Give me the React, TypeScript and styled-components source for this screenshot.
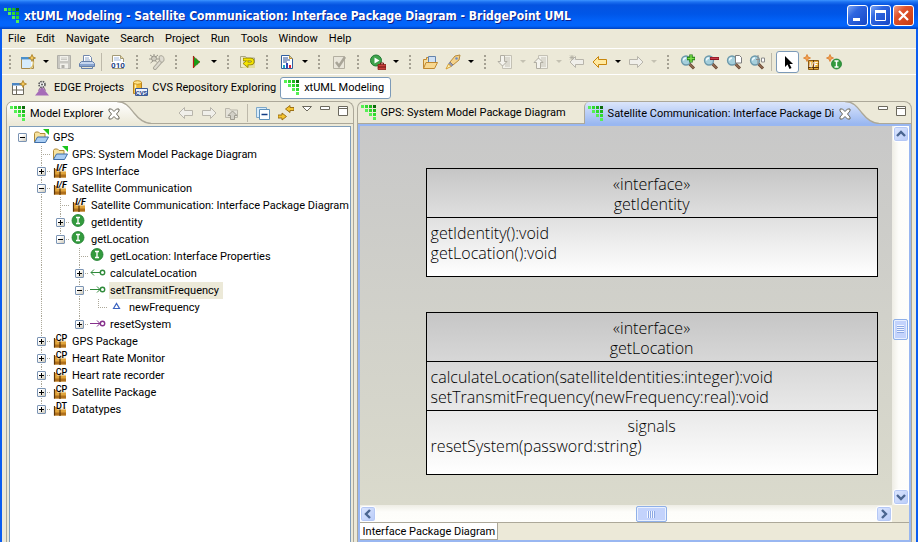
import React from "react";
import styled, { createGlobalStyle, css } from "styled-components";

const face = "#ece9d8";
const line = "#aca899";
const activeBlue = "#99b7f1";
const uiFont = 'Roboto, "Liberation Sans", sans-serif';

const GlobalStyle = createGlobalStyle`
  *, *::before, *::after { box-sizing: border-box; }
  body { margin: 0; background: ${face}; color: #000; font: 11px/16px ${uiFont}; }
  button { margin: 0; padding: 0; border: 0; background: none; color: inherit; font: inherit; }
  svg { display: block; flex: none; }
`;

/* ---------- window frame ---------- */

const Window = styled.div`
  height: 100vh;
  display: flex;
  flex-direction: column;
  overflow: hidden;
  background: ${face};
`;

const TitleBar = styled.header`
  flex: none;
  height: 29px;
  display: flex;
  align-items: center;
  gap: 4px;
  padding: 2px 4px 0;
  background: linear-gradient(#3d95ff 0, #1c70f0 2px, #0453e0 5px, #0056e8 14px, #0264fb 22px, #0264fb 26px, #0042c0 29px);
`;

const WindowTitle = styled.h1`
  flex: 1;
  min-width: 0;
  margin: 0;
  overflow: hidden;
  white-space: nowrap;
  color: #fff;
  font: bold 12px/20px "DejaVu Sans Condensed", "DejaVu Sans", sans-serif;
  text-shadow: 1px 1px 0 #0f1f8a;
`;

const WindowButtons = styled.div`
  display: flex;
  gap: 2px;
`;

const WindowButton = styled.button<{ $close?: boolean }>`
  width: 21px;
  height: 21px;
  display: grid;
  place-items: center;
  border: 1px solid #fff;
  border-radius: 3px;
  background: ${(p) =>
    p.$close
      ? "linear-gradient(135deg, #f0a088, #e0532c 35%, #c63a10)"
      : "linear-gradient(135deg, #7da6f4, #2f66e0 35%, #1747c6)"};
`;

const Frame = styled.div`
  flex: 1;
  min-height: 0;
  display: flex;
  flex-direction: column;
  border: solid #0a5cf0;
  border-width: 0 2px;
`;

/* ---------- menu and tool bars ---------- */

const MenuBar = styled.nav`
  flex: none;
  height: 20px;
  display: flex;
  align-items: center;
  gap: 11px;
  padding-left: 6px;
  border-bottom: 1px solid #fff;
`;

const ToolBar = styled.div`
  flex: none;
  height: 26px;
  display: flex;
  align-items: center;
  border-bottom: 1px solid #fff;
`;

const ToolButton = styled.button<{ $pressed?: boolean }>`
  flex: none;
  width: 23px;
  height: 22px;
  display: grid;
  place-items: center;
  ${(p) =>
    p.$pressed &&
    css`
      border: 1px solid #7c9ab8;
      border-radius: 3px;
      background: #fff;
    `}
`;

const DropButton = styled.button<{ $off?: boolean }>`
  flex: none;
  width: 13px;
  height: 22px;
  display: grid;
  place-items: center;
  &::before {
    content: "";
    border: 3px solid transparent;
    border-top-color: ${(p) => (p.$off ? "#c4c1b2" : "#000")};
    border-bottom-width: 0;
  }
`;

const Handle = styled.span`
  flex: none;
  width: 16px;
  height: 14px;
  background: repeating-linear-gradient(#a5a193 0 2px, transparent 2px 4px) 7px 0 / 2px 14px no-repeat;
  &:first-child { width: 14px; }
`;

const Separator = styled.span`
  flex: none;
  width: 8px;
  height: 18px;
  background: linear-gradient(#bdb9aa, #bdb9aa) 3px 0 / 1px 100% no-repeat;
`;

const PerspectiveBar = styled.div`
  flex: none;
  height: 25px;
  display: flex;
  align-items: center;
  padding-left: 5px;
`;

const Perspective = styled.button<{ $active?: boolean }>`
  height: 22px;
  display: flex;
  align-items: center;
  gap: 4px;
  padding: 0 3px;
  white-space: nowrap;
  border: 1px solid transparent;
  ${(p) =>
    p.$active &&
    css`
      padding-right: 6px;
      border-color: #7c9ab8;
      border-radius: 3px;
      background: #fff;
    `}
`;

/* ---------- views ---------- */

const Workspace = styled.main`
  flex: 1;
  min-height: 0;
  display: grid;
  grid-template-columns: minmax(0, 348fr) minmax(0, 556fr);
  gap: 3px;
  padding: 1px 4px 0 4px;
`;

const View = styled.section`
  min-height: 0;
  display: flex;
  flex-direction: column;
  border: 1px solid ${line};
  border-bottom: 0;
  border-radius: 7px 8px 0 0;
  overflow: hidden;
`;

const TabStrip = styled.div`
  flex: none;
  height: 22px;
  display: flex;
`;

const Tab = styled.div<{ $tone?: "white" | "blue" }>`
  flex: none;
  display: flex;
  align-items: center;
  gap: 4px;
  padding: 1px 0 0 3px;
  white-space: nowrap;
  ${(p) =>
    p.$tone === "white" &&
    css`
      padding-right: 3px;
      background: linear-gradient(#fff, ${face});
    `}
  ${(p) =>
    p.$tone === "blue" &&
    css`
      border-left: 1px solid ${line};
      border-radius: 5px 0 0 0;
      background: linear-gradient(#dbe5fb, ${activeBlue});
    `}
  ${(p) =>
    !p.$tone &&
    css`
      flex: 0 0 226px;
      border-bottom: 1px solid ${line};
    `}
`;

const TabClose = styled.button`
  position: relative;
  margin: 0 -8px 0 1px;
`;

const StripRest = styled.div`
  flex: 1;
  min-width: 0;
  display: flex;
  align-items: center;
  justify-content: flex-end;
  padding-right: 1px;
  border-bottom: 1px solid ${line};
`;

const ViewButton = styled.button`
  flex: none;
  width: 18px;
  height: 18px;
  display: flex;
  justify-content: center;
  padding-top: 3px;
  align-self: flex-start;
`;

/* ---------- tree ---------- */

const TreeBox = styled.div`
  flex: 1;
  min-height: 0;
  margin: 2px 2px 0;
  padding: 2px 0 0 3px;
  overflow: hidden;
  border: 1px solid #7f9db9;
  border-bottom: 0;
  background: #fff;
`;

const TreeRow = styled.div`
  height: 17px;
  display: flex;
  align-items: center;
  white-space: nowrap;
`;

const vDots = "repeating-linear-gradient(#aca899 0 1px, transparent 1px 2px)";
const hDots = "repeating-linear-gradient(90deg, #aca899 0 1px, transparent 1px 2px)";

const Branch = styled.span<{ $kind: string }>`
  flex: none;
  width: 19px;
  height: 17px;
  display: grid;
  place-items: center;
  background-repeat: no-repeat;
  ${(p) =>
    p.$kind === "|" &&
    css`
      background-image: ${vDots};
      background-position: 9px 0;
      background-size: 1px 17px;
    `}
  ${(p) =>
    p.$kind === "+" &&
    css`
      background-image: ${vDots}, ${hDots};
      background-position: 9px 0, 9px 8px;
      background-size: 1px 17px, 10px 1px;
    `}
  ${(p) =>
    p.$kind === "L" &&
    css`
      background-image: ${vDots}, ${hDots};
      background-position: 9px 0, 9px 8px;
      background-size: 1px 8px, 10px 1px;
    `}
`;

const Expander = styled.button<{ $open: boolean }>`
  width: 9px;
  height: 9px;
  border: 1px solid #7b94b4;
  border-radius: 1px;
  background:
    linear-gradient(#000, #000) center / 5px 1px no-repeat,
    linear-gradient(#000, #000) center / 1px ${(p) => (p.$open ? 1 : 5)}px no-repeat,
    linear-gradient(135deg, #fff 30%, #cdc8b8);
`;

const TreeIcon = styled.span`
  flex: none;
  width: 20px;
  height: 17px;
  padding-left: 1px;
`;

const TreeLabel = styled.span<{ $selected?: boolean }>`
  height: 17px;
  padding: 1px 4px 0 1px;
  background: ${(p) => (p.$selected ? face : "none")};
`;

/* ---------- editor ---------- */

const EditorBody = styled.div`
  flex: 1;
  min-height: 0;
  display: grid;
  grid-template: minmax(0, 1fr) 17px 18px / minmax(0, 1fr) 17px;
  border: 2px solid ${activeBlue};
`;

const Canvas = styled.div`
  position: relative;
  overflow: hidden;
  background: linear-gradient(#c8c8c8, #dadacc);
`;

const ClassBox = styled.article<{ $top: number; $height: number }>`
  position: absolute;
  left: 66px;
  top: ${(p) => p.$top}px;
  width: 452px;
  height: ${(p) => p.$height}px;
  border: 1px solid #000;
  background: linear-gradient(#c6c6c6, #fff);
  font: 300 16px/20px "Open Sans", "Noto Sans", sans-serif;
  white-space: nowrap;
`;

const Compartment = styled.div`
  padding: 5px 4px 3px;
  & + & { border-top: 1px solid #000; }
`;

const Centered = styled.div`
  text-align: center;
`;

const ScrollBar = styled.div<{ $vertical?: boolean }>`
  display: flex;
  flex-direction: ${(p) => (p.$vertical ? "column" : "row")};
  padding: ${(p) => (p.$vertical ? "0 0 0 1px" : "1px 0 0")};
  background: linear-gradient(${(p) => (p.$vertical ? "90deg" : "180deg")}, #eeede5, #fdfdfa 40%, #fefefb);
`;

const ScrollArrow = styled.button`
  flex: none;
  width: 16px;
  height: 16px;
  display: grid;
  place-items: center;
  border: 1px solid #fff;
  border-radius: 3px;
  box-shadow: inset 0 0 0 1px #b5c8f5;
  background: linear-gradient(135deg, #dde7ff, #b8cbf8);
`;

const Space = styled.span<{ $share: number }>`
  flex: ${(p) => p.$share} 1 0;
`;

const Thumb = styled.span<{ $vertical?: boolean }>`
  flex: none;
  width: ${(p) => (p.$vertical ? 15 : 31)}px;
  height: ${(p) => (p.$vertical ? 21 : 16)}px;
  display: grid;
  place-items: center;
  border: 1px solid #8fb0e8;
  border-radius: 2px;
  box-shadow: inset 0 0 0 1px #e9f0ff;
  background: #c3d3fc;
  &::before {
    content: "";
    width: ${(p) => (p.$vertical ? 7 : 8)}px;
    height: ${(p) => (p.$vertical ? 8 : 7)}px;
    background: repeating-linear-gradient(${(p) => (p.$vertical ? "180deg" : "90deg")}, #f2f6ff 0 1px, #8ca8e4 1px 2px);
  }
`;

const PageTabs = styled.div`
  grid-column: 1 / -1;
  border-top: 1px solid ${line};
`;

const PageTab = styled.button`
  height: 17px;
  padding: 1px 2px 0 3px;
  border-right: 1px solid ${line};
  border-bottom: 1px solid ${line};
  background: #fff;
`;

/* ---------- icons ---------- */

type Kids = { children?: React.ReactNode };
const Ico = ({ children }: Kids) => (
  <svg width="16" height="16" viewBox="0 0 16 16" aria-hidden="true">{children}</svg>
);

const Logo = () => (
  <Ico>
    <g shapeRendering="crispEdges">
      <path d="M0 0h3v3H0zM4 4h3v3H4zM8 8h3v3H8zM12 12h3v3h-3z" fill="#55f055" />
      <path d="M4 0h3v3H4zM8 4h3v3H8zM12 8h3v3h-3z" fill="#2edb2e" />
      <path d="M8 0h3v3H8zM12 4h3v3h-3z" fill="#1fb81f" />
      <path d="M12 0h3v3h-3z" fill="#0b6b0b" />
    </g>
  </Ico>
);

const Spark = ({ x = 12, y = 4, c = "#f6c85a", s = "#a87a1c" }: { x?: number; y?: number; c?: string; s?: string }) => (
  <path d={`M${x} ${y - 3.5}l1 2.5 2.5 1-2.5 1-1 2.5-1-2.5-2.5-1 2.5-1z`} fill={c} stroke={s} strokeWidth=".8" />
);

const NewIcon = () => (
  <Ico>
    <path d="M1.500 3.500h12v11h-12z" fill="#f4faff" stroke="#a8894a" />
    <path d="M2 6h9v8H2z" fill="#d6ebfa" />
    <path d="M1 3h13v2.500H1z" fill="#4a90cc" />
    <path d="M10 14.500c3-1 3.500-3 3.500-7" fill="none" stroke="#d9c070" strokeWidth="1.500" />
    <Spark />
  </Ico>
);
const SaveIcon = () => (
  <Ico>
    <path d="M1.500 1.500h13v13h-13z" fill="#c9c8c2" stroke="#b0afa8" />
    <path d="M4 2h8v5H4zM4 9.500h8v5H4z" fill="#f1f0ea" />
    <path d="M5.500 11h3v3h-3z" fill="#b0afa8" />
    <path d="M5 4h6M5 5.500h6" stroke="#c9c8c2" />
  </Ico>
);
const PrintIcon = () => (
  <Ico>
    <path d="M4.500 7V1.500h6l2 2V7" fill="#fff" stroke="#7187ad" />
    <path d="M6 4h4M6 6h5" stroke="#8fa7cc" />
    <path d="M2.500 7.500h11l2 2v3h-15v-3z" fill="#c6d6ee" stroke="#6580ab" />
    <path d="M1 10h14v2H1z" fill="#88a4cf" />
    <path d="M2.500 12.500h11v2h-11z" fill="#e9e4ce" stroke="#6580ab" />
  </Ico>
);
const BinaryIcon = () => (
  <Ico>
    <path d="M2.500 1.500h8l3 3v10h-11z" fill="#fff" stroke="#a39a78" />
    <path d="M10.500 1.500v3h3" fill="#ead9a0" stroke="#a39a78" />
    <path d="M4 4h5M4 6h7" stroke="#9fb6da" />
    <path d="M1 8h14v6H1z" fill="#fff" />
    <text x="8" y="14" textAnchor="middle" fontSize="8" fontWeight="700" fill="#1d3f86" fontFamily="Roboto, sans-serif">010</text>
  </Ico>
);
const WrenchIcon = () => (
  <Ico>
    <path d="M6 14L13 6" stroke="#a8a598" strokeWidth="4" strokeLinecap="round" />
    <path d="M6 14L13 6" stroke="#dedbd0" strokeWidth="2" strokeLinecap="round" />
    <path d="M10 2.500c3-2 5 0 5 3s-3 3-4 2z" fill="#dedbd0" stroke="#a8a598" />
    <circle cx="5" cy="4.500" r="2.500" fill="#d0cdc0" stroke="#98958a" />
    <path d="M1 1l3 2M5 0v2M9 1L6.500 3M0 5h2.500M8 5h2M1.500 9L4 7M8 8.500L6.500 7" stroke="#98958a" />
  </Ico>
);
const PlayIcon = () => (
  <Ico>
    <path d="M5 2l7 6-7 6z" fill="#18a018" />
    <path d="M5.500 2v12" stroke="#c01818" strokeWidth="1.200" />
    <path d="M5 2l7 6-7 6" fill="none" stroke="#7a3a10" strokeDasharray="1 1" />
  </Ico>
);
const FolderSwapIcon = () => (
  <Ico>
    <path d="M.500 13.500v-11h5l1 1.500h8v9.500z" fill="#f0eccb" stroke="#a8a486" />
    <path d="M1 14h14V9z" fill="#e4dd9e" />
    <path d="M3 5.500h7.500c3 0 3 4 0 4H6" fill="none" stroke="#8a7c00" strokeWidth="3.400" />
    <path d="M8 5.500v8l-5-4z" fill="#f5e400" stroke="#8a7c00" strokeWidth=".8" />
    <path d="M3.500 5.500h7c3 0 3 4 0 4H6" fill="none" stroke="#f5e400" strokeWidth="2" />
  </Ico>
);
const ReportIcon = () => (
  <Ico>
    <path d="M2.500 1.500h8l3 3v10h-11z" fill="#fff" stroke="#2f5ea0" />
    <path d="M10.500 1.500v3h3" fill="#f3cf70" stroke="#b8903a" />
    <path d="M4 4h5M4 6h7M4 8h4" stroke="#2b4f95" />
    <path d="M4 11h2v3H4z" fill="#1aa6c8" />
    <path d="M7 9h2v5H7z" fill="#3048b8" />
    <path d="M10 11h2v3h-2z" fill="#e02038" />
  </Ico>
);
const CheckIcon = () => (
  <Ico>
    <path d="M2.500 2.500h11v12h-11z" fill="#e9e6da" stroke="#b3afa1" />
    <path d="M5 8l3 4 6-9" fill="none" stroke="#a9a598" strokeWidth="2.500" />
  </Ico>
);
const RunToolIcon = () => (
  <Ico>
    <circle cx="6" cy="6.500" r="5.500" fill="#3fa34c" stroke="#1f7a32" />
    <path d="M4.500 3.500l5 3-5 3z" fill="#fff" />
    <path d="M8 10.500h8v5H8z" fill="#c8403a" stroke="#8b1f1b" strokeWidth=".8" />
    <path d="M10.500 10.500v-1.500h3v1.500M8 13h8" fill="none" stroke="#6e1512" />
  </Ico>
);
const OpenFolderIcon = () => (
  <Ico>
    <path d="M1.500 14.500v-9h3v-2h3" fill="#f7dfa0" stroke="#c08830" />
    <path d="M6.500 2.500h7v8h-7z" fill="#cfe0f4" stroke="#6484ac" />
    <path d="M1.500 14.500l2.500-6h11.500l-3 6z" fill="#f8d890" stroke="#c08830" />
  </Ico>
);
const RocketIcon = () => (
  <Ico>
    <path d="M15 1l-5 1-5 6 3 3 6-5z" fill="#f3d28c" stroke="#b98a3a" />
    <path d="M5 8l3 3-2 1.500L3.500 10z" fill="#9a9cae" stroke="#6d7088" strokeWidth=".7" />
    <path d="M3.500 10l-2.500 5 5-2.500z" fill="#fff7c0" stroke="#d8a030" />
    <circle cx="11.500" cy="4.500" r="1.300" fill="#6f8fc8" />
  </Ico>
);
const AnnotationIcon = ({ up }: { up?: boolean }) => (
  <Ico>
    <path d="M5.500 1.500h9v13h-9z" fill="#f2f1ea" stroke="#c4c1b5" />
    <path d="M8 4h5M8 6h5M8 8h5M8 10h5M8 12h5" stroke="#c4c1b5" />
    <path
      d={up ? "M3.500 14.500v-6h-2.500l4.500-4.500 4.500 4.500H7.500v6z" : "M3.500 1.500v6h-2.500l4.500 4.500 4.500-4.500H7.500v-6z"}
      fill="#f4f3ed"
      stroke="#b0ada2"
    />
  </Ico>
);
const ArrowIcon = ({ right, gold, star }: { right?: boolean; gold?: boolean; star?: boolean }) => (
  <Ico>
    <path
      d={right ? "M15 8L9.500 2.500v3h-8v5h8v3z" : "M1 8l5.500-5.500v3h8v5h-8v3z"}
      fill={gold ? "#ffe9a0" : "#f0efea"}
      stroke={gold ? "#c8860c" : "#b8b5ab"}
    />
    {star && <path d="M3 1v5M.500 3.500h5M1 1.500l4 4M5 1.500l-4 4" stroke="#aeaba0" strokeWidth=".8" />}
  </Ico>
);
const Lens = ({ children }: Kids) => (
  <Ico>
    <path d="M9 9.500l5 5" stroke="#6b4a34" strokeWidth="3" />
    <path d="M9 9.500l4.500 4.500" stroke="#b08468" />
    <circle cx="6" cy="6.500" r="4.500" fill="#a5cfdc" stroke="#6d99ab" strokeWidth="1.300" />
    <path d="M3.500 6.500c0-1.500 1-2.500 2.500-2.500" fill="none" stroke="#f0fbff" strokeWidth="1.300" />
    {children}
  </Ico>
);
const PointerIcon = () => (
  <Ico>
    <path d="M5 2v11l2.500-2.500 2 4.500 2-1-2-4h3.500z" fill="#000" />
  </Ico>
);
const NewPackageIcon = () => (
  <Ico>
    <path d="M5.500 6.500h10v9h-10z" fill="#e3a93c" stroke="#8a5a14" />
    <path d="M5 13.500h11M10.500 6v10" stroke="#5a3408" />
    <text x="10.500" y="13" textAnchor="middle" fontSize="7" fontWeight="700" fontStyle="italic" fill="#fff" fontFamily="Roboto, sans-serif">I/F</text>
    <Spark x={4} y={4} c="#f5a050" s="#d87a28" />
  </Ico>
);
const InterfaceBadge = ({ cx, cy, r }: { cx: number; cy: number; r: number }) => (
  <>
    <circle cx={cx} cy={cy} r={r} fill="#339b3e" stroke="#1f7f30" strokeWidth=".8" />
    <path d={`M${cx - 2} ${cy - 3}h4M${cx} ${cy - 3}v6M${cx - 2} ${cy + 3}h4`} stroke="#fff" strokeWidth="1.400" />
  </>
);
const NewInterfaceIcon = () => (
  <Ico>
    <InterfaceBadge cx={10.5} cy={10} r={5} />
    <Spark x={4} y={4} c="#f5a050" s="#d87a28" />
  </Ico>
);
const NewPerspectiveIcon = () => (
  <Ico>
    <path d="M1.500 3.500h11v11h-11z" fill="#fff" stroke="#6d6a5e" />
    <path d="M1 3h12v2.500H1z" fill="#4a86c4" />
    <path d="M5.500 6v8M1.500 10h11" stroke="#6d6a5e" />
    <Spark />
  </Ico>
);
const EdgeIcon = () => (
  <Ico>
    <path d="M1 15.500L8 7l7 8.500z" fill="#a66cb8" />
    <circle cx="8" cy="4.500" r="3" fill="#f2f2f2" stroke="#5a5a5a" strokeWidth="1.600" strokeDasharray="1.600 .8" />
    <circle cx="8" cy="4.500" r="1" fill="#5a5a5a" />
    <path d="M6.500 7.500l-2 3M9.500 7.500l2 3" stroke="#7a4a8a" />
  </Ico>
);
const CvsIcon = () => (
  <Ico>
    <path d="M1.500 2.500v11h8v-11z" fill="#f0b830" stroke="#b8801a" />
    <ellipse cx="5.500" cy="2.500" rx="4" ry="1.800" fill="#ffe48c" stroke="#c8901c" />
    <path d="M3.500 4.500v9" stroke="#fff0b0" strokeWidth="1.500" />
    <path d="M3.500 8.500h12v7h-12z" fill="#eef4ff" stroke="#3b5b96" />
    <text x="9.500" y="14.500" textAnchor="middle" fontSize="6" fontWeight="700" fill="#1d3f86" fontFamily="Roboto, sans-serif">CVS</text>
  </Ico>
);
const UpFolderIcon = () => (
  <Ico>
    <path d="M1.500 12.500v-9h4l1 1.500h7v7.500z" fill="#e4e2d9" stroke="#bab7ab" />
    <path d="M6.500 14.500v-4h-2.500l4.500-4.500 4.500 4.500h-2.500v4z" fill="#d2d0c7" stroke="#9d9a8f" />
  </Ico>
);
const CollapseIcon = () => (
  <Ico>
    <path d="M1.500 2.500h10v10h-10z" fill="#d7ecfb" stroke="#7fa8c8" />
    <path d="M4.500 4.500h10v10h-10z" fill="#fff" stroke="#5f92bb" />
    <path d="M6.500 9.500h6" stroke="#123c84" strokeWidth="1.500" />
  </Ico>
);
const SyncIcon = () => (
  <Ico>
    <path d="M16 5.500h-4v2L7.500 4 12 .500v2h4z" fill="#f4c430" stroke="#94660c" strokeWidth=".9" />
    <path d="M0 10h4V8l4.500 3.500L4 15v-2H0z" fill="#f4c430" stroke="#94660c" strokeWidth=".9" />
  </Ico>
);
const MenuTriangle = () => (
  <svg width="10" height="8" viewBox="0 0 10 8" aria-hidden="true">
    <path d="M.500 1.500h9L5 6z" fill="#fff" stroke="#6b685d" />
  </svg>
);
const MinimizeIcon = () => (
  <svg width="10" height="8" viewBox="0 0 10 8" aria-hidden="true">
    <path d="M.500 1.500h9v3h-9z" fill="#fff" stroke="#6b685d" />
  </svg>
);
const MaximizeIcon = () => (
  <svg width="10" height="11" viewBox="0 0 10 11" aria-hidden="true">
    <path d="M.500 1.500h9v9h-9zM.500 3.500h9" fill="#fff" stroke="#6b685d" />
  </svg>
);
const CloseIcon = () => (
  <svg width="12" height="12" viewBox="0 0 12 12" aria-hidden="true">
    <path d="M1 1h2.500L6 3.500 8.500 1H11v2L8.500 6 11 9v2H8.500L6 8.500 3.500 11H1V9l2.500-3L1 3z" fill="#fff" stroke="#6b685d" />
  </svg>
);

const TabCurve = ({ from, to, id }: { from: string; to: string; id: string }) => (
  <svg width="36" height="22" viewBox="0 0 36 22" aria-hidden="true">
    <defs>
      <linearGradient id={id} x1="0" y1="0" x2="0" y2="1">
        <stop offset="0" stopColor={from} />
        <stop offset="1" stopColor={to} />
      </linearGradient>
    </defs>
    <path d="M0 0h2c9 0 13 6 17 11s9 10.500 17 10.500V22H0z" fill={`url(#${id})`} />
    <path d="M2-.500c9 0 13 6.500 17 11.500s9 10.500 17 10.500" fill="none" stroke={line} strokeWidth="1.300" />
  </svg>
);

const ProjectIcon = () => (
  <Ico>
    <path d="M1.500 13V4.500l1-1.500h3l1.500 1.500h5V8" fill="#f7e3a0" stroke="#b08a38" />
    <path d="M1.500 13.500L4.500 8h11l-3 5.500z" fill="#a9cdf3" stroke="#3f6ea8" />
    <path d="M10 0h6v6z" fill="#1cc41c" />
  </Ico>
);
const PackageIcon = ({ tag }: { tag: string }) => (
  <Ico>
    <path d="M2 6h12v8.500H2z" fill="#e0a43a" />
    <path d="M2 11.500h12v3H2z" fill="#b0701c" />
    <path d="M8 6v9M2.500 5v9.500" stroke="#5a3408" strokeWidth="1.200" />
    <path d="M5 1h9v7.500H5z" fill="#fff" fillOpacity=".8" />
    <text x="9.500" y="8" textAnchor="middle" fontSize="9" fontWeight={tag === "I/F" ? 700 : 500} fontStyle={tag === "I/F" ? "italic" : "normal"} fontFamily="Roboto, sans-serif">{tag}</text>
  </Ico>
);
const InterfaceIcon = () => (
  <Ico><InterfaceBadge cx={7} cy={6.5} r={6} /></Ico>
);
const MessageIcon = ({ color, back }: { color: string; back?: boolean }) => (
  <Ico>
    <path d={back ? "M1 7.500h10M4 4.500l-3 3 3 3" : "M0 7.500h11M7 4.500l3 3-3 3"} fill="none" stroke={color} />
    <circle cx="12.500" cy="7.500" r="2.200" fill="#fff" stroke={color} strokeWidth="1.400" />
  </Ico>
);
const ParameterIcon = () => (
  <Ico><path d="M4.500 9.500L7.500 4.500l3 5z" fill="#fff" stroke="#3a63c0" strokeWidth="1.200" /></Ico>
);

const Chevron = ({ d }: { d: string }) => (
  <svg width="10" height="10" viewBox="0 0 10 10" aria-hidden="true">
    <path d={d} fill="none" stroke="#4a6590" strokeWidth="2.400" />
  </svg>
);

/* ---------- data ---------- */

type Tool = { label: string; icon?: React.ReactNode; kind?: "handle" | "sep" | "drop"; off?: boolean; pressed?: boolean };
const handle: Tool = { label: "", kind: "handle" };
const sep: Tool = { label: "", kind: "sep" };
const drop = (label: string, off = false): Tool => ({ label, kind: "drop", off });

const tools: Tool[] = [
  handle, { label: "New", icon: <NewIcon /> }, drop("New options"), { label: "Save", icon: <SaveIcon /> }, { label: "Print", icon: <PrintIcon /> },
  sep, { label: "Build", icon: <BinaryIcon /> },
  handle, { label: "Configure", icon: <WrenchIcon /> },
  handle, { label: "Run", icon: <PlayIcon /> }, drop("Run options"),
  handle, { label: "Synchronize", icon: <FolderSwapIcon /> },
  handle, { label: "Report", icon: <ReportIcon /> }, drop("Report options"),
  handle, { label: "Validate", icon: <CheckIcon /> },
  handle, { label: "External tools", icon: <RunToolIcon /> }, drop("External tools options"),
  handle, { label: "Open", icon: <OpenFolderIcon /> }, { label: "Launch", icon: <RocketIcon /> }, drop("Launch options"),
  handle, { label: "Next annotation", icon: <AnnotationIcon /> }, drop("Next annotation options", true),
  { label: "Previous annotation", icon: <AnnotationIcon up /> }, drop("Previous annotation options", true),
  { label: "Last edit", icon: <ArrowIcon star /> }, { label: "Back", icon: <ArrowIcon gold /> }, drop("Back history"),
  { label: "Forward", icon: <ArrowIcon right /> }, drop("Forward history", true),
  handle,
  { label: "Zoom in", icon: <Lens><path d="M7 4.500h8M11 .500v8" stroke="#1d7a12" strokeWidth="3.400" /><path d="M7.500 4.500h7M11 1v7" stroke="#7ee04a" strokeWidth="1.500" /></Lens> },
  { label: "Zoom out", icon: <Lens><path d="M7 4.500h9" stroke="#8c1420" strokeWidth="3" /><path d="M7.500 4.300h8" stroke="#d8485a" /></Lens> },
  { label: "Zoom to fit", icon: <Lens><path d="M9.500 1.500h4l2 2v5.500h-6z" fill="#fff" stroke="#7d7d7d" /></Lens> },
  { label: "Zoom to selection", icon: <Lens><path d="M9 1v9M7 5.500h4M12.500 4h3v4h-3z" fill="#fff" stroke="#8a8a8a" /></Lens> },
  sep, { label: "Select", icon: <PointerIcon />, pressed: true },
  { label: "Interface package", icon: <NewPackageIcon /> }, { label: "Interface", icon: <NewInterfaceIcon /> },
];

type Node = { guides: string; open?: boolean; icon: React.ReactNode; label: string; selected?: boolean };
const green = "#2f8a3a";
const purple = "#86308c";
const tree: Node[] = [
  { guides: " ", open: true, icon: <ProjectIcon />, label: "GPS" },
  { guides: " +", icon: <ProjectIcon />, label: "GPS: System Model Package Diagram" },
  { guides: " +", open: false, icon: <PackageIcon tag="I/F" />, label: "GPS Interface" },
  { guides: " +", open: true, icon: <PackageIcon tag="I/F" />, label: "Satellite Communication" },
  { guides: " |+", icon: <PackageIcon tag="I/F" />, label: "Satellite Communication: Interface Package Diagram" },
  { guides: " |+", open: false, icon: <InterfaceIcon />, label: "getIdentity" },
  { guides: " |L", open: true, icon: <InterfaceIcon />, label: "getLocation" },
  { guides: " | +", icon: <InterfaceIcon />, label: "getLocation: Interface Properties" },
  { guides: " | +", open: false, icon: <MessageIcon color={green} back />, label: "calculateLocation" },
  { guides: " | +", open: true, icon: <MessageIcon color={green} />, label: "setTransmitFrequency", selected: true },
  { guides: " | |L", icon: <ParameterIcon />, label: "newFrequency" },
  { guides: " | L", open: false, icon: <MessageIcon color={purple} />, label: "resetSystem" },
  { guides: " +", open: false, icon: <PackageIcon tag="CP" />, label: "GPS Package" },
  { guides: " +", open: false, icon: <PackageIcon tag="CP" />, label: "Heart Rate Monitor" },
  { guides: " +", open: false, icon: <PackageIcon tag="CP" />, label: "Heart rate recorder" },
  { guides: " +", open: false, icon: <PackageIcon tag="CP" />, label: "Satellite Package" },
  { guides: " L", open: false, icon: <PackageIcon tag="DT" />, label: "Datatypes" },
];

/* ---------- parts ---------- */

const ToolItem = ({ tool }: { tool: Tool }) => {
  if (tool.kind === "handle") return <Handle />;
  if (tool.kind === "sep") return <Separator />;
  if (tool.kind === "drop") return <DropButton $off={tool.off} aria-label={tool.label} />;
  return <ToolButton $pressed={tool.pressed} aria-label={tool.label}>{tool.icon}</ToolButton>;
};

const TreeNode = ({ node }: { node: Node }) => {
  const last = node.guides.length - 1;
  return (
    <TreeRow role="treeitem" aria-selected={!!node.selected}>
      {node.guides.split("").map((kind, i) => (
        <Branch key={i} $kind={kind}>
          {i === last && node.open !== undefined && (
            <Expander $open={node.open} aria-label={(node.open ? "Collapse " : "Expand ") + node.label} />
          )}
        </Branch>
      ))}
      <TreeIcon>{node.icon}</TreeIcon>
      <TreeLabel $selected={node.selected}>{node.label}</TreeLabel>
    </TreeRow>
  );
};

export default function App() {
  return (
    <Window>
      <GlobalStyle />
      <TitleBar>
        <Logo />
        <WindowTitle>xtUML Modeling - Satellite Communication: Interface Package Diagram - BridgePoint UML</WindowTitle>
        <WindowButtons>
          <WindowButton aria-label="Minimize window">
            <svg width="15" height="15" viewBox="0 0 15 15"><path d="M3 10h7v3H3z" fill="#fff" /></svg>
          </WindowButton>
          <WindowButton aria-label="Maximize window">
            <svg width="15" height="15" viewBox="0 0 15 15"><path d="M2.500 3v9.500h10V3" fill="none" stroke="#fff" /><path d="M2 2h11v3H2z" fill="#fff" /></svg>
          </WindowButton>
          <WindowButton $close aria-label="Close window">
            <svg width="15" height="15" viewBox="0 0 15 15"><path d="M3 3l9 9M12 3l-9 9" stroke="#fff" strokeWidth="2.200" /></svg>
          </WindowButton>
        </WindowButtons>
      </TitleBar>
      <Frame>
        <MenuBar>
          {["File", "Edit", "Navigate", "Search", "Project", "Run", "Tools", "Window", "Help"].map((m) => (
            <button key={m}>{m}</button>
          ))}
        </MenuBar>
        <ToolBar role="toolbar">
          {tools.map((t, i) => <ToolItem key={i} tool={t} />)}
        </ToolBar>
        <PerspectiveBar>
          <ToolButton aria-label="Open perspective"><NewPerspectiveIcon /></ToolButton>
          <Perspective><EdgeIcon />EDGE Projects</Perspective>
          <Perspective><CvsIcon />CVS Repository Exploring</Perspective>
          <Perspective $active><Logo />xtUML Modeling</Perspective>
        </PerspectiveBar>
        <Workspace>
          <View>
            <TabStrip>
              <Tab $tone="white">
                <Logo />Model Explorer
                <TabClose aria-label="Close Model Explorer"><CloseIcon /></TabClose>
              </Tab>
              <TabCurve id="curve-explorer" from="#ffffff" to={face} />
              <StripRest>
                <ToolButton aria-label="Back"><ArrowIcon /></ToolButton>
                <ToolButton aria-label="Forward"><ArrowIcon right /></ToolButton>
                <ToolButton aria-label="Up"><UpFolderIcon /></ToolButton>
                <Separator />
                <ToolButton aria-label="Collapse all"><CollapseIcon /></ToolButton>
                <ToolButton aria-label="Link with editor"><SyncIcon /></ToolButton>
                <ViewButton aria-label="View menu"><MenuTriangle /></ViewButton>
                <ViewButton aria-label="Minimize"><MinimizeIcon /></ViewButton>
                <ViewButton aria-label="Maximize"><MaximizeIcon /></ViewButton>
              </StripRest>
            </TabStrip>
            <TreeBox role="tree">
              {tree.map((n, i) => <TreeNode key={i} node={n} />)}
            </TreeBox>
          </View>
          <View>
            <TabStrip>
              <Tab><Logo />GPS: System Model Package Diagram</Tab>
              <Tab $tone="blue">
                <Logo />Satellite Communication: Interface Package Di
                <TabClose aria-label="Close editor"><CloseIcon /></TabClose>
              </Tab>
              <TabCurve id="curve-editor" from="#dbe5fb" to={activeBlue} />
              <StripRest>
                <ViewButton aria-label="Minimize editor"><MinimizeIcon /></ViewButton>
                <ViewButton aria-label="Maximize editor"><MaximizeIcon /></ViewButton>
              </StripRest>
            </TabStrip>
            <EditorBody>
              <Canvas>
                <ClassBox $top={42} $height={109}>
                  <Compartment>
                    <Centered>«interface»</Centered>
                    <Centered>getIdentity</Centered>
                  </Compartment>
                  <Compartment>
                    <div>getIdentity():void</div>
                    <div>getLocation():void</div>
                  </Compartment>
                </ClassBox>
                <ClassBox $top={186} $height={163}>
                  <Compartment>
                    <Centered>«interface»</Centered>
                    <Centered>getLocation</Centered>
                  </Compartment>
                  <Compartment>
                    <div>calculateLocation(satelliteIdentities:integer):void</div>
                    <div>setTransmitFrequency(newFrequency:real):void</div>
                  </Compartment>
                  <Compartment>
                    <Centered>signals</Centered>
                    <div>resetSystem(password:string)</div>
                  </Compartment>
                </ClassBox>
              </Canvas>
              <ScrollBar $vertical>
                <ScrollArrow aria-label="Scroll up"><Chevron d="M1 7l4-4 4 4" /></ScrollArrow>
                <Space $share={176} />
                <Thumb $vertical />
                <Space $share={149} />
                <ScrollArrow aria-label="Scroll down"><Chevron d="M1 3l4 4 4-4" /></ScrollArrow>
              </ScrollBar>
              <ScrollBar>
                <ScrollArrow aria-label="Scroll left"><Chevron d="M7 1L3 5l4 4" /></ScrollArrow>
                <Space $share={260} />
                <Thumb />
                <Space $share={209} />
                <ScrollArrow aria-label="Scroll right"><Chevron d="M3 1l4 4-4 4" /></ScrollArrow>
              </ScrollBar>
              <span />
              <PageTabs>
                <PageTab>Interface Package Diagram</PageTab>
              </PageTabs>
            </EditorBody>
          </View>
        </Workspace>
      </Frame>
    </Window>
  );
}
